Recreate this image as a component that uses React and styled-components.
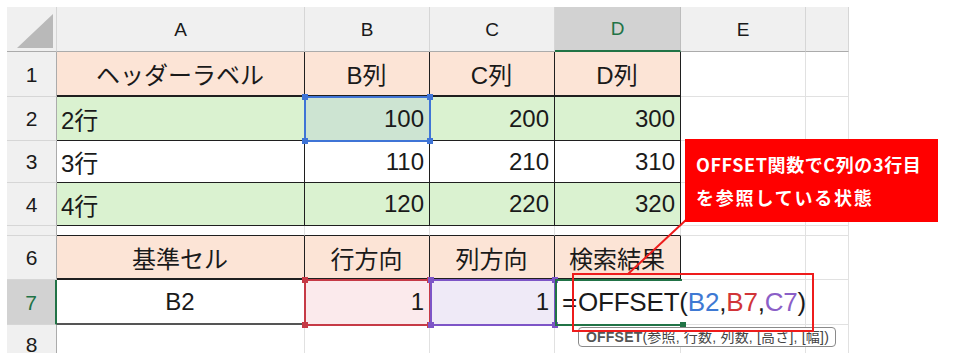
import React from 'react';
import styled, { createGlobalStyle } from 'styled-components';

const GlobalStyle = createGlobalStyle`
  body {
    margin: 0;
    background: #fff;
    font-family: "Liberation Sans", "Noto Sans CJK JP", sans-serif;
    color: #1a1a1a;
  }
`;

const GRID = '#e1e1e1';
const LINE = '#1f1f1f';
const PEACH = '#fce4d6';
const GREEN = '#daf2d0';

const Page = styled.div`
  position: relative;
  width: 954px;
  height: 353px;
  overflow: hidden;
`;

const Sheet = styled.div`
  display: grid;
  grid-template-columns: 50px 248px 125px 125px 126px 125px 43px;
  grid-template-rows: 45px 45px 44px 42px 43px 10px 44px 45px 40px;
  margin: 7px 0 0 7px;
  width: 842px;
`;

const ColHead = styled.div`
  box-sizing: border-box;
  display: flex;
  align-items: center;
  justify-content: center;
  background: ${p => (p.$active ? '#d2d2d2' : '#f0f0f0')};
  color: ${p => (p.$active ? '#217346' : '#1a1a1a')};
  border-right: 1px solid ${p => (p.$active ? '#bdbdbd' : '#d6d6d6')};
  border-bottom: ${p => (p.$active ? '2px solid #217346' : '1px solid #ababab')};
  font-size: 19px;
  padding-top: 1px;
`;

const Corner = styled.div`
  box-sizing: border-box;
  background: #f0f0f0;
  border-right: 1px solid #d6d6d6;
  border-bottom: 1px solid #ababab;
  display: flex;
  align-items: flex-end;
  justify-content: flex-end;
  padding: 0 3px 3px 0;
`;

const RowHead = styled.div`
  box-sizing: border-box;
  display: flex;
  align-items: center;
  justify-content: center;
  background: ${p => (p.$active ? '#d2d2d2' : '#f0f0f0')};
  color: ${p => (p.$active ? '#217346' : '#1a1a1a')};
  border-right: ${p => (p.$active ? '2px solid #217346' : '1px solid #ababab')};
  border-bottom: 1px solid #d6d6d6;
  font-size: 21px;
  padding-top: 1px;
`;

const Cell = styled.div`
  box-sizing: border-box;
  display: flex;
  align-items: center;
  justify-content: ${p => p.$align || 'flex-start'};
  background: ${p => p.$bg || 'transparent'};
  border-right: 1px solid ${p => p.$br || GRID};
  border-bottom: ${p => p.$bw || 1}px solid ${p => p.$bb || GRID};
  padding: 0 5px 0 4px;
  font-size: 24px;
  white-space: nowrap;
  overflow: visible;
`;

const Formula = styled.span`
  position: relative;
  z-index: 2;
  font-size: 26px;
  letter-spacing: -0.2px;
  margin-left: 3px;
`;

const Eq = styled.span`
  margin-right: 1px;
`;

const Ref = styled.span`
  color: ${p => p.$c};
`;

const Range = styled.div`
  position: absolute;
  box-sizing: border-box;
  border: 2px solid ${p => p.$c};
  ${p => p.$open && 'border-right: none;'}
  z-index: 3;
`;

const Handle = styled.div`
  position: absolute;
  width: 6px;
  height: 6px;
  background: ${p => p.$c};
  ${p => (p.$top ? 'top: -4px;' : 'bottom: -4px;')}
  ${p => (p.$left ? 'left: -4px;' : 'right: -4px;')}
`;

const Callout = styled.div`
  position: absolute;
  left: 685px;
  top: 139px;
  width: 253px;
  height: 83px;
  box-sizing: border-box;
  background: #ff0000;
  color: #fff;
  font-family: "Noto Sans CJK JP", sans-serif;
  font-weight: 700;
  font-size: 18px;
  line-height: 33px;
  padding: 9px 0 0 11px;
  z-index: 5;
`;

const CalloutLine = styled.div`
  letter-spacing: ${p => p.$spacing}px;
`;

const Frame = styled.div`
  position: absolute;
  left: 572px;
  top: 273px;
  width: 242px;
  height: 59px;
  box-sizing: border-box;
  border: 2px solid #ee1c1c;
  z-index: 5;
`;

const Tip = styled.div`
  position: absolute;
  left: 578px;
  top: 327px;
  width: 258px;
  height: 20px;
  box-sizing: border-box;
  border: 1px solid #8a8a8a;
  border-radius: 4px;
  background: #fff;
  font-family: "Liberation Sans", "Noto Sans CJK JP", sans-serif;
  font-size: 14px;
  line-height: 18px;
  color: #444;
  padding-left: 7px;
  letter-spacing: 0.2px;
  white-space: nowrap;
  z-index: 4;
`;

const TipName = styled.b`
  color: #555;
`;

const Leader = styled.svg`
  position: absolute;
  left: 0;
  top: 0;
  z-index: 5;
  pointer-events: none;
`;

function RangeBox({ x, y, w, h, c, open }) {
  return (
    <Range $c={c} $open={open} style={{ left: x, top: y, width: w, height: h }}>
      {!open && <Handle $c={c} $top $left />}
      {!open && <Handle $c={c} $top />}
      {!open && <Handle $c={c} $left />}
      <Handle $c={c} />
    </Range>
  );
}

const cols = ['A', 'B', 'C', 'D', 'E'];

const dataRows = [
  { n: 2, bg: GREEN, label: '2行', v: ['100', '200', '300'] },
  { n: 3, bg: '#fff', label: '3行', v: ['110', '210', '310'] },
  { n: 4, bg: GREEN, label: '4行', v: ['120', '220', '320'] },
];

export default function App() {
  return (
    <Page>
      <GlobalStyle />
      <Sheet>
        <Corner>
          <svg width="36" height="34" viewBox="0 0 36 34">
            <polygon points="36,0 36,34 0,34" fill="#b9b9b9" />
          </svg>
        </Corner>
        {cols.map(c => (
          <ColHead key={c} $active={c === 'D'}>{c}</ColHead>
        ))}
        <ColHead />

        <RowHead>1</RowHead>
        <Cell $bg={PEACH} $align="center" $br={LINE} $bb={LINE} $bw={2}>ヘッダーラベル</Cell>
        <Cell $bg={PEACH} $align="center" $br={LINE} $bb={LINE} $bw={2}>B列</Cell>
        <Cell $bg={PEACH} $align="center" $br={LINE} $bb={LINE} $bw={2}>C列</Cell>
        <Cell $bg={PEACH} $align="center" $br={LINE} $bb={LINE} $bw={2}>D列</Cell>
        <Cell />
        <Cell />

        {dataRows.map(r => (
          <React.Fragment key={r.n}>
            <RowHead>{r.n}</RowHead>
            <Cell $bg={r.bg} $br={LINE} $bb={LINE}>{r.label}</Cell>
            {r.v.map((v, i) => (
              <Cell
                key={v}
                $bg={r.n === 2 && i === 0 ? '#cde4d2' : r.bg}
                $align="flex-end"
                $br={LINE}
                $bb={LINE}
              >
                {v}
              </Cell>
            ))}
            <Cell />
            <Cell />
          </React.Fragment>
        ))}

        <RowHead />
        <Cell $bb={LINE} />
        <Cell $bb={LINE} />
        <Cell $bb={LINE} />
        <Cell $bb={LINE} />
        <Cell />
        <Cell />

        <RowHead>6</RowHead>
        <Cell $bg={PEACH} $align="center" $br={LINE} $bb={LINE} $bw={2}>基準セル</Cell>
        <Cell $bg={PEACH} $align="center" $br={LINE} $bb={LINE} $bw={2}>行方向</Cell>
        <Cell $bg={PEACH} $align="center" $br={LINE} $bb={LINE} $bw={2}>列方向</Cell>
        <Cell $bg={PEACH} $align="center" $br={LINE} $bb={LINE} $bw={2}>検索結果</Cell>
        <Cell />
        <Cell />

        <RowHead $active>7</RowHead>
        <Cell $align="center" $br={LINE} $bb="#555" $bw={2}>B2</Cell>
        <Cell $bg="#fbeaec" $align="flex-end" $br={LINE} $bb={LINE}>1</Cell>
        <Cell $bg="#efeaf7" $align="flex-end" $br={LINE} $bb={LINE}>1</Cell>
        <Cell $br="transparent" $bb={LINE}>
          <Formula>
            <Eq>=</Eq>OFFSET(<Ref $c="#3e79d3">B2</Ref>,<Ref $c="#d13438">B7</Ref>,<Ref $c="#8b5fc7">C7</Ref>)
          </Formula>
        </Cell>
        <Cell />
        <Cell />

        <RowHead>8</RowHead>
        <Cell />
        <Cell />
        <Cell />
        <Cell />
        <Cell />
        <Cell />
      </Sheet>

      <RangeBox x={304} y={96} w={127} h={46} c="#3f74d6" />
      <RangeBox x={304} y={279} w={127} h={47} c="#c63a46" />
      <RangeBox x={430} y={279} w={126} h={47} c="#7d55c7" />
      <RangeBox x={555} y={279} w={127} h={47} c="#217346" open />

      <Leader width="954" height="353">
        <line x1="687" y1="219" x2="628" y2="274" stroke="#ee1c1c" strokeWidth="2" />
      </Leader>

      <Callout>
        <CalloutLine $spacing={0.6}>OFFSET関数でC列の3行目</CalloutLine>
        <CalloutLine $spacing={1.8}>を参照している状態</CalloutLine>
      </Callout>

      <Frame />

      <Tip>
        <TipName>OFFSET</TipName>(参照, 行数, 列数, [高さ], [幅])
      </Tip>
    </Page>
  );
}
